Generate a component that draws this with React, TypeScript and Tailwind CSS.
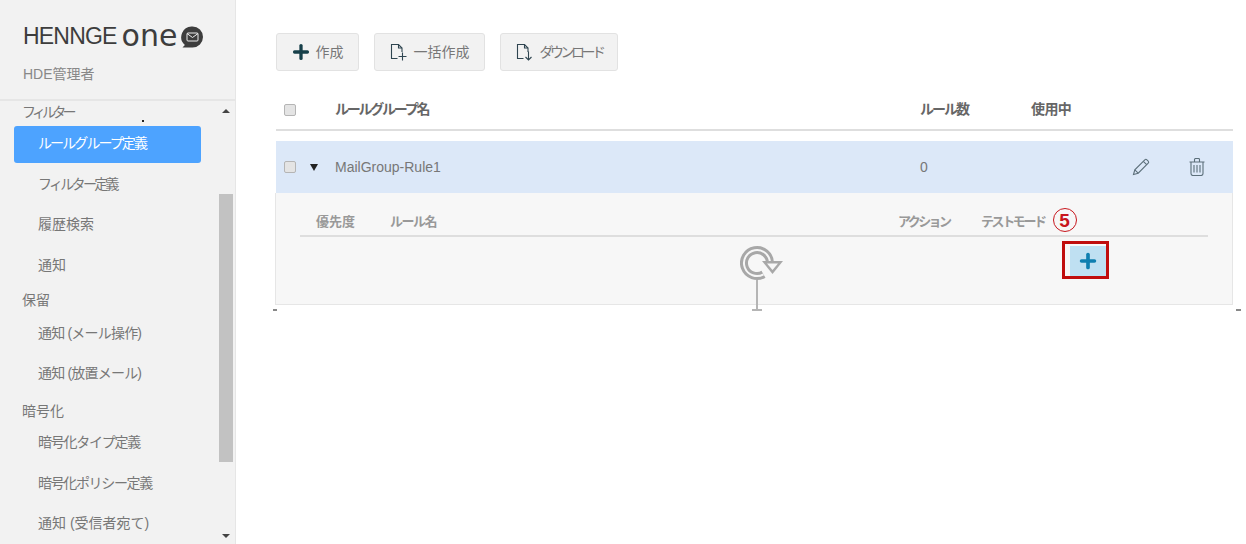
import { Plus } from "lucide-react";

const font = "font-['Liberation_Sans','Noto_Sans_CJK_JP',sans-serif]";

function SectionLabel({ label, tracking = "" }: { label: string; tracking?: string }) {
  return <div className={`flex h-[22px] items-center pl-[22px] text-[14px] text-[#777] ${tracking}`}>{label}</div>;
}

function NavItem({ label, active, tracking = "" }: { label: string; active?: boolean; tracking?: string }) {
  return (
    <div
      className={
        active
          ? `mb-[4px] ml-[14px] flex h-[37px] w-[187px] items-center rounded-[3px] bg-[#4da3ff] pb-[2px] pl-[24px] text-[14px] text-white ${tracking}`
          : `mb-[3.4px] ml-[14px] flex h-[37px] w-[187px] items-center pb-[2px] pl-[24px] text-[14px] text-[#777] ${tracking}`
      }
    >
      {label}
    </div>
  );
}

function Logo() {
  return (
    <div className="flex h-[30px] items-center text-[#3d3d3d]">
      <span className="text-[23px] leading-none tracking-[-0.8px]">HENNGE</span>
      <span className="ml-[5px] font-['DejaVu_Sans'] text-[30px] leading-none">one</span>
      <svg viewBox="0 0 24 24" className="ml-[3px] mt-[2px] h-[24px] w-[24px]">
        <path d="M12.500 1.500a10.500 10.500 0 0 1 0 21H2.500l2.400-2.600A10.500 10.500 0 0 1 12.500 1.500Z" fill="#3d3d3d" />
        <rect x="7" y="8" width="11" height="8" rx="1" fill="none" stroke="#eee" strokeWidth="1" />
        <path d="M7 8.500 12.500 12.500l5.500-4" fill="none" stroke="#eee" strokeWidth="1" />
      </svg>
    </div>
  );
}

function Sidebar() {
  return (
    <aside className="flex h-[544px] w-[236px] shrink-0 flex-col border-r border-[#e6e6e6] bg-[#f2f2f2]">
      <div className="h-[101px] shrink-0 border-b-2 border-[#e6e6e6] pl-[23px] pt-[21px]">
        <Logo />
        <div className="mt-[13px] text-[14px] text-[#888]">HDE管理者</div>
      </div>
      <div className="flex min-h-0 flex-1">
        <div className="w-[219px] overflow-hidden">
          <div className="mb-[3px]">
            <SectionLabel label="フィルター" tracking="tracking-[-3.8px]" />
          </div>
          <NavItem label="ルールグループ定義" active tracking="tracking-[-1.9px]" />
          <NavItem label="フィルター定義" tracking="tracking-[-2.7px]" />
          <NavItem label="履歴検索" />
          <NavItem label="通知" />
          <div className="mb-[4px] mt-[5px]">
            <SectionLabel label="保留" />
          </div>
          <NavItem label="通知 (メール操作)" tracking="tracking-[-0.8px]" />
          <NavItem label="通知 (放置メール)" tracking="tracking-[-0.8px]" />
          <div className="mb-[3px] mt-[7px]">
            <SectionLabel label="暗号化" />
          </div>
          <NavItem label="暗号化タイプ定義" tracking="tracking-[-1.25px]" />
          <NavItem label="暗号化ポリシー定義" tracking="tracking-[-1.35px]" />
          <NavItem label="通知 (受信者宛て)" />
        </div>
        <div className="flex w-[14px] flex-col items-center">
          <div className="flex h-[19px] w-full shrink-0 items-center justify-center">
            <div className="h-0 w-0 border-x-[4px] border-b-[4px] border-x-transparent border-b-[#444]" />
          </div>
          <div className="mt-[74px] h-[268px] w-full shrink-0 bg-[#c2c2c2]" />
          <div className="mt-auto flex h-[16px] w-full items-center justify-center">
            <div className="h-0 w-0 border-x-[4px] border-t-[4px] border-x-transparent border-t-[#444]" />
          </div>
        </div>
      </div>
    </aside>
  );
}

function FileIcon({ down }: { down?: boolean }) {
  return (
    <svg viewBox="0 0 18 18" className="h-[18px] w-[18px]" fill="none" stroke="#2f4550" strokeWidth="1.1">
      <path d="M7.500 15.500H1.500V1.500h7l3.500 3.500v4" />
      <path d="M8.500 1.500V5H12" />
      {down ? (
        <path d="M12.500 8.500v8.500M9.500 14l3 3 3-3" />
      ) : (
        <path d="M12.500 9.500v8M8.500 13.500h8" />
      )}
    </svg>
  );
}

function ToolButton({
  label,
  icon,
  layout,
  tracking = "",
}: {
  label: string;
  icon: React.ReactNode;
  layout: string;
  tracking?: string;
}) {
  return (
    <div
      className={`flex h-[38px] items-center justify-center rounded-[3px] border border-[#e2e2e2] bg-[#f2f2f2] text-[14px] text-[#777] ${layout}`}
    >
      {icon}
      <span className={tracking}>{label}</span>
    </div>
  );
}

function Checkbox() {
  return <div className="h-[12px] w-[12px] rounded-[2px] border border-[#b5b5b5] bg-[#e4e4e4]" />;
}

function ReloadGlyph() {
  return (
    <svg viewBox="0 0 44 36" className="h-[36px] w-[44px]" fill="none">
      <path d="M30 18A13 13 0 1 0 23.500 29.300" stroke="#a8a8a8" strokeWidth="8" />
      <path d="M30 18A13 13 0 1 0 23.500 29.300" stroke="#f7f7f7" strokeWidth="2" />
      <path d="M22 16h21L32.500 29Z" fill="#a8a8a8" />
      <path d="M27 18.500h11l-5.500 6.500Z" fill="#f7f7f7" />
    </svg>
  );
}

function PencilIcon() {
  return (
    <svg viewBox="0 0 18 18" className="h-[18px] w-[18px]" fill="none" stroke="#5c6f7a" strokeWidth="1.1">
      <path d="M1.500 16.500 2.800 11.800 12.800 1.800a1.500 1.500 0 0 1 2.100 0l1.300 1.300a1.500 1.500 0 0 1 0 2.100L6.200 15.200Z" />
      <path d="M2.800 11.800 6.200 15.200M11.300 3.300l3.400 3.400" />
    </svg>
  );
}

function TrashIcon() {
  return (
    <svg viewBox="0 0 16 18" className="h-[18px] w-[16px]" fill="none" stroke="#5c6f7a" strokeWidth="1.1">
      <path d="M.5 4h15M5.500 4V1.500a1 1 0 0 1 1-1h3a1 1 0 0 1 1 1V4" />
      <path d="M2 4v11.500a2 2 0 0 0 2 2h8a2 2 0 0 0 2-2V4" />
      <path d="M5 7v7.500M8 7v7.500M11 7v7.500" />
    </svg>
  );
}

export default function App() {
  return (
    <div className={`relative flex h-[544px] w-[1246px] overflow-hidden bg-white ${font}`}>
      <Sidebar />
      <main className="min-w-0 flex-1 pl-[40px] pr-[13px] pt-[33px]">
        <div className="flex gap-[15px]">
          <ToolButton
            label="作成"
            layout="w-[83px] gap-[4px] pr-[2px]"
            icon={<Plus size={22} strokeWidth={3.6} className="text-[#17404a]" />}
          />
          <ToolButton label="一括作成" layout="w-[111px] gap-[6px]" icon={<FileIcon />} />
          <ToolButton label="ダウンロード" layout="w-[118px] gap-[6px]" tracking="tracking-[-3.5px]" icon={<FileIcon down />} />
        </div>

        <div className="mt-[19px] flex h-[41px] items-center border-b-2 border-[#dedede] text-[14px] font-bold text-[#666]">
          <div className="ml-[8px]">
            <Checkbox />
          </div>
          <div className="ml-[39px] w-[585px] tracking-[-2.25px]">ルールグループ名</div>
          <div className="w-[111px] tracking-[-2px]">ルール数</div>
          <div className="tracking-[-0.6px]">使用中</div>
        </div>

        <div className="mt-[10px] flex h-[52px] items-center bg-[#dce8f8] text-[14px] text-[#777]">
          <div className="ml-[8px]">
            <Checkbox />
          </div>
          <div className="ml-[14px] h-0 w-0 border-x-[4px] border-t-[7px] border-x-transparent border-t-[#222]" />
          <div className="ml-[17px] w-[585px]">MailGroup-Rule1</div>
          <div className="w-[212px]">0</div>
          <PencilIcon />
          <div className="ml-[39px]">
            <TrashIcon />
          </div>
        </div>

        <div className="-ml-px h-[112px] border border-t-0 border-[#e6e6e6] bg-[#f7f7f7] px-[24px]">
          <div className="flex h-[44px] items-center border-b-2 border-[#dedede] pt-[16px] text-[13px] font-bold text-[#999]">
            <div className="ml-[16px] w-[74px]">優先度</div>
            <div className="w-[508px] tracking-[-1.5px]">ルール名</div>
            <div className="w-[83px] tracking-[-2.6px]">アクション</div>
            <div className="tracking-[-2.4px]">テストモード</div>
            <div className="ml-[8px] -mt-[4px] flex h-[24px] w-[24px] items-center justify-center rounded-full border-[1.5px] border-[#c8171e] text-[19px] font-bold leading-none text-[#c8171e]">
              5
            </div>
          </div>
          <div className="relative flex h-[46px] items-center">
            <div className="ml-[440px] mt-[6px]">
              <ReloadGlyph />
            </div>
            <div className="ml-[278px] flex h-[38px] w-[47px] items-center justify-end border-[3px] border-[#c00d0d] bg-[#f7f7f7]">
              <div className="mt-[2px] flex h-[30px] w-[36px] items-center justify-center bg-[#bfe0f2]">
                <Plus size={22} strokeWidth={4} className="text-[#0f7fb0]" />
              </div>
            </div>
            <div className="absolute left-[456px] top-[43px] h-[30px] w-[2px] bg-[#b5b5b5]" />
            <div className="absolute left-[452px] top-[72px] h-[2px] w-[10px] bg-[#b5b5b5]" />
          </div>
        </div>
      </main>
      <div className="absolute left-[142px] top-[120px] h-[2px] w-[2px] bg-[#222]" />
      <div className="absolute left-[273px] top-[309px] h-[2px] w-[4px] bg-[#888]" />
      <div className="absolute left-[1236px] top-[309px] h-[2px] w-[5px] bg-[#888]" />
    </div>
  );
}
